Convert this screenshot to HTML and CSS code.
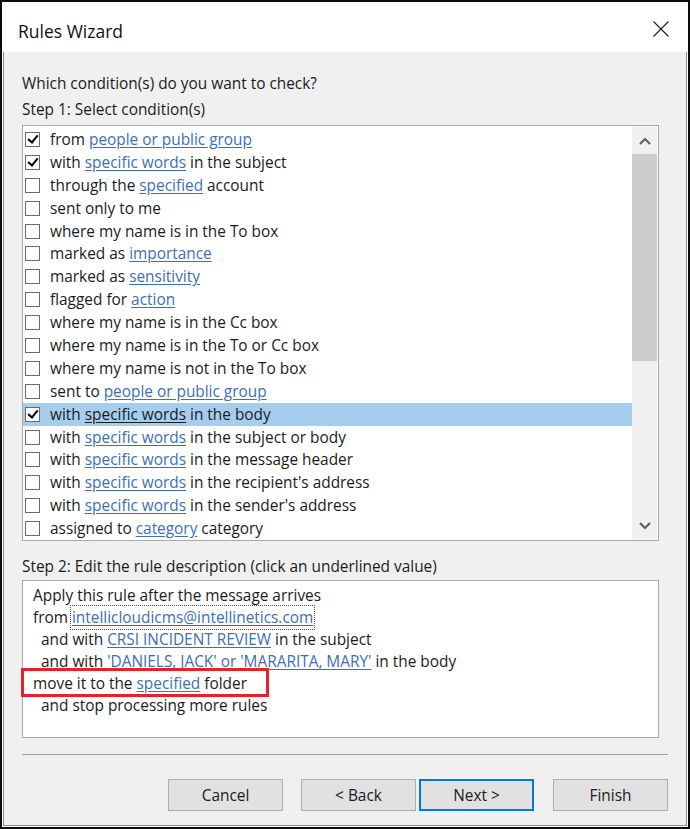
FILE: index.html
```html
<!DOCTYPE html>
<html lang="en">
<head>
  <meta charset="UTF-8" />
  <title>Rules Wizard</title>
  <link rel="stylesheet" href="styles.css">
</head>
<body>
  <div class="window">
    <div class="titlebar">
      <span class="title">Rules Wizard</span>
      <span class="close">
        <svg width="16" height="16" viewBox="0 0 16 16"><path d="M0.5 0.5 L15.5 15.5 M15.5 0.5 L0.5 15.5" stroke="#1a1a1a" stroke-width="1.1" fill="none"/></svg>
      </span>
    </div>

    <div class="content">
      <p class="prompt">Which condition(s) do you want to check?</p>
      <p class="step">Step 1: Select condition(s)</p>

      <div class="listbox">
        <ul class="conditions">
          <li class="checked"><span class="box"></span>from <a>people or public group</a></li>
          <li class="checked"><span class="box"></span>with <a>specific words</a> in the subject</li>
          <li><span class="box"></span>through the <a>specified</a> account</li>
          <li><span class="box"></span>sent only to me</li>
          <li><span class="box"></span>where my name is in the To box</li>
          <li><span class="box"></span>marked as <a>importance</a></li>
          <li><span class="box"></span>marked as <a>sensitivity</a></li>
          <li><span class="box"></span>flagged for <a>action</a></li>
          <li><span class="box"></span>where my name is in the Cc box</li>
          <li><span class="box"></span>where my name is in the To or Cc box</li>
          <li><span class="box"></span>where my name is not in the To box</li>
          <li><span class="box"></span>sent to <a>people or public group</a></li>
          <li class="checked selected"><span class="box"></span>with <a>specific words</a> in the body</li>
          <li><span class="box"></span>with <a>specific words</a> in the subject or body</li>
          <li><span class="box"></span>with <a>specific words</a> in the message header</li>
          <li><span class="box"></span>with <a>specific words</a> in the recipient's address</li>
          <li><span class="box"></span>with <a>specific words</a> in the sender's address</li>
          <li><span class="box"></span>assigned to <a>category</a> category</li>
        </ul>
        <div class="scrollbar">
          <div class="arrow">
            <svg width="12" height="8" viewBox="0 0 12 8"><path d="M1 7 L6 2 L11 7" stroke="#606060" stroke-width="2.2" fill="none"/></svg>
          </div>
          <div class="thumb"></div>
          <div class="track"></div>
          <div class="arrow">
            <svg width="12" height="8" viewBox="0 0 12 8"><path d="M1 1 L6 6 L11 1" stroke="#606060" stroke-width="2.2" fill="none"/></svg>
          </div>
        </div>
      </div>

      <p class="step step-two">Step 2: Edit the rule description (click an underlined value)</p>

      <div class="description">
        <div class="line">Apply this rule after the message arrives</div>
        <div class="line">from <a class="focused">intellicloudicms@intellinetics.com</a></div>
        <div class="line sub">and with <a>CRSI INCIDENT REVIEW</a> in the subject</div>
        <div class="line sub">and with <a>'DANIELS, JACK' or 'MARARITA, MARY'</a> in the body</div>
        <div class="line">move it to the <a>specified</a> folder</div>
        <div class="line sub">and stop processing more rules</div>
        <!-- annotation drawn over the action line -->
        <div class="highlight-box"></div>
      </div>

      <div class="separator"></div>

      <div class="buttons">
        <button class="btn cancel">Cancel</button>
        <button class="btn">&lt; Back</button>
        <button class="btn default">Next &gt;</button>
        <button class="btn finish">Finish</button>
      </div>
    </div>
  </div>
</body>
</html>
```

FILE: styles.css
```css
html, body {
  margin: 0;
  padding: 0;
  background-color: #000;
}

body {
  font-family: 'Open Sans', 'Noto Sans', sans-serif;
  font-size: 15.4px;
  color: #1b1b1b;
}

.window {
  width: 690px;
  height: 829px;
  box-sizing: border-box;
  border: 2px solid #0c0c0c;
  background-color: #f0f0f0;
  box-shadow: inset 0 0 0 1px #ffffff, inset 0 0 0 2px #8c8c8c;
  overflow: hidden;
}

.titlebar {
  height: 50px;
  box-sizing: border-box;
  background-color: #fff;
  display: flex;
  align-items: flex-start;
  padding: 17px 0 0 15px;
  margin: 0 1px;
}

.title {
  font-size: 17.5px;
  line-height: 24px;
  color: #111;
}

.close {
  margin-left: auto;
  margin-right: 18px;
  margin-top: 2px;
  width: 16px;
  height: 16px;
}

.close svg {
  display: block;
}

.content {
  padding: 21px 0 0 20px;
}

p {
  margin: 0;
  line-height: 22px;
}

.prompt {
  margin-bottom: 4px;
}

.step {
  margin-bottom: 4px;
}

.step-two {
  margin-top: 15px;
  margin-bottom: 2px;
}

a {
  color: #3d6fb4;
  text-decoration: underline;
  text-underline-offset: 2px;
}

/* condition list */

.listbox {
  width: 637px;
  height: 416px;
  box-sizing: border-box;
  border: 1px solid #a9a9a9;
  background-color: #fff;
  display: flex;
}

.conditions {
  list-style: none;
  margin: 0;
  padding: 2px 0 0 0;
  flex: 1;
}

.conditions li {
  height: 22.9px;
  display: flex;
  align-items: center;
  white-space: pre;
  padding-left: 2px;
}

.conditions li.selected {
  background-color: #a5cdee;
}

.conditions li.selected a {
  color: #1b1b1b;
}

.box {
  width: 15px;
  height: 15px;
  box-sizing: border-box;
  border: 1px solid #6a6a6a;
  background-color: #fff;
  margin-right: 10px;
  position: relative;
  flex: none;
}

.checked .box::after {
  content: "";
  position: absolute;
  left: 4px;
  top: 0px;
  width: 4px;
  height: 8px;
  border-right: 2px solid #000;
  border-bottom: 2px solid #000;
  transform: rotate(40deg);
}

.scrollbar {
  width: 25px;
  margin: 1px 1px 1px 0;
  display: flex;
  flex-direction: column;
  background-color: #f0f0f0;
}

.arrow {
  height: 27px;
  display: flex;
  align-items: center;
  justify-content: center;
}

.thumb {
  height: 207px;
  background-color: #cdcdcd;
}

.track {
  flex: 1;
}

/* rule description */

.description {
  width: 637px;
  height: 158px;
  box-sizing: border-box;
  border: 1px solid #a9a9a9;
  background-color: #fff;
  padding: 4px 0 0 10px;
  position: relative;
}

.line {
  line-height: 22px;
  white-space: pre;
}

.line.sub {
  padding-left: 8px;
}

.focused {
  outline: 1px dotted #555;
  outline-offset: 1px;
}

.highlight-box {
  position: absolute;
  left: -2px;
  top: 87px;
  width: 248px;
  height: 29px;
  box-sizing: border-box;
  border: 3px solid #e8202a;
}

.separator {
  width: 646px;
  height: 1px;
  background-color: #a0a0a0;
  margin-top: 16px;
}

/* dialog buttons */

.buttons {
  width: 646px;
  display: flex;
  justify-content: flex-end;
  margin-top: 24px;
}

.btn {
  width: 115px;
  height: 32px;
  box-sizing: border-box;
  border: 1px solid #adadad;
  background-color: #e1e1e1;
  font-family: 'Open Sans', 'Noto Sans', sans-serif;
  font-size: 15.4px;
  color: #1b1b1b;
  padding: 0;
}

.cancel {
  margin-right: 18px;
}

.default {
  border: 2px solid #0078d7;
  margin-left: 3px;
}

.finish {
  margin-left: 19px;
}
```
